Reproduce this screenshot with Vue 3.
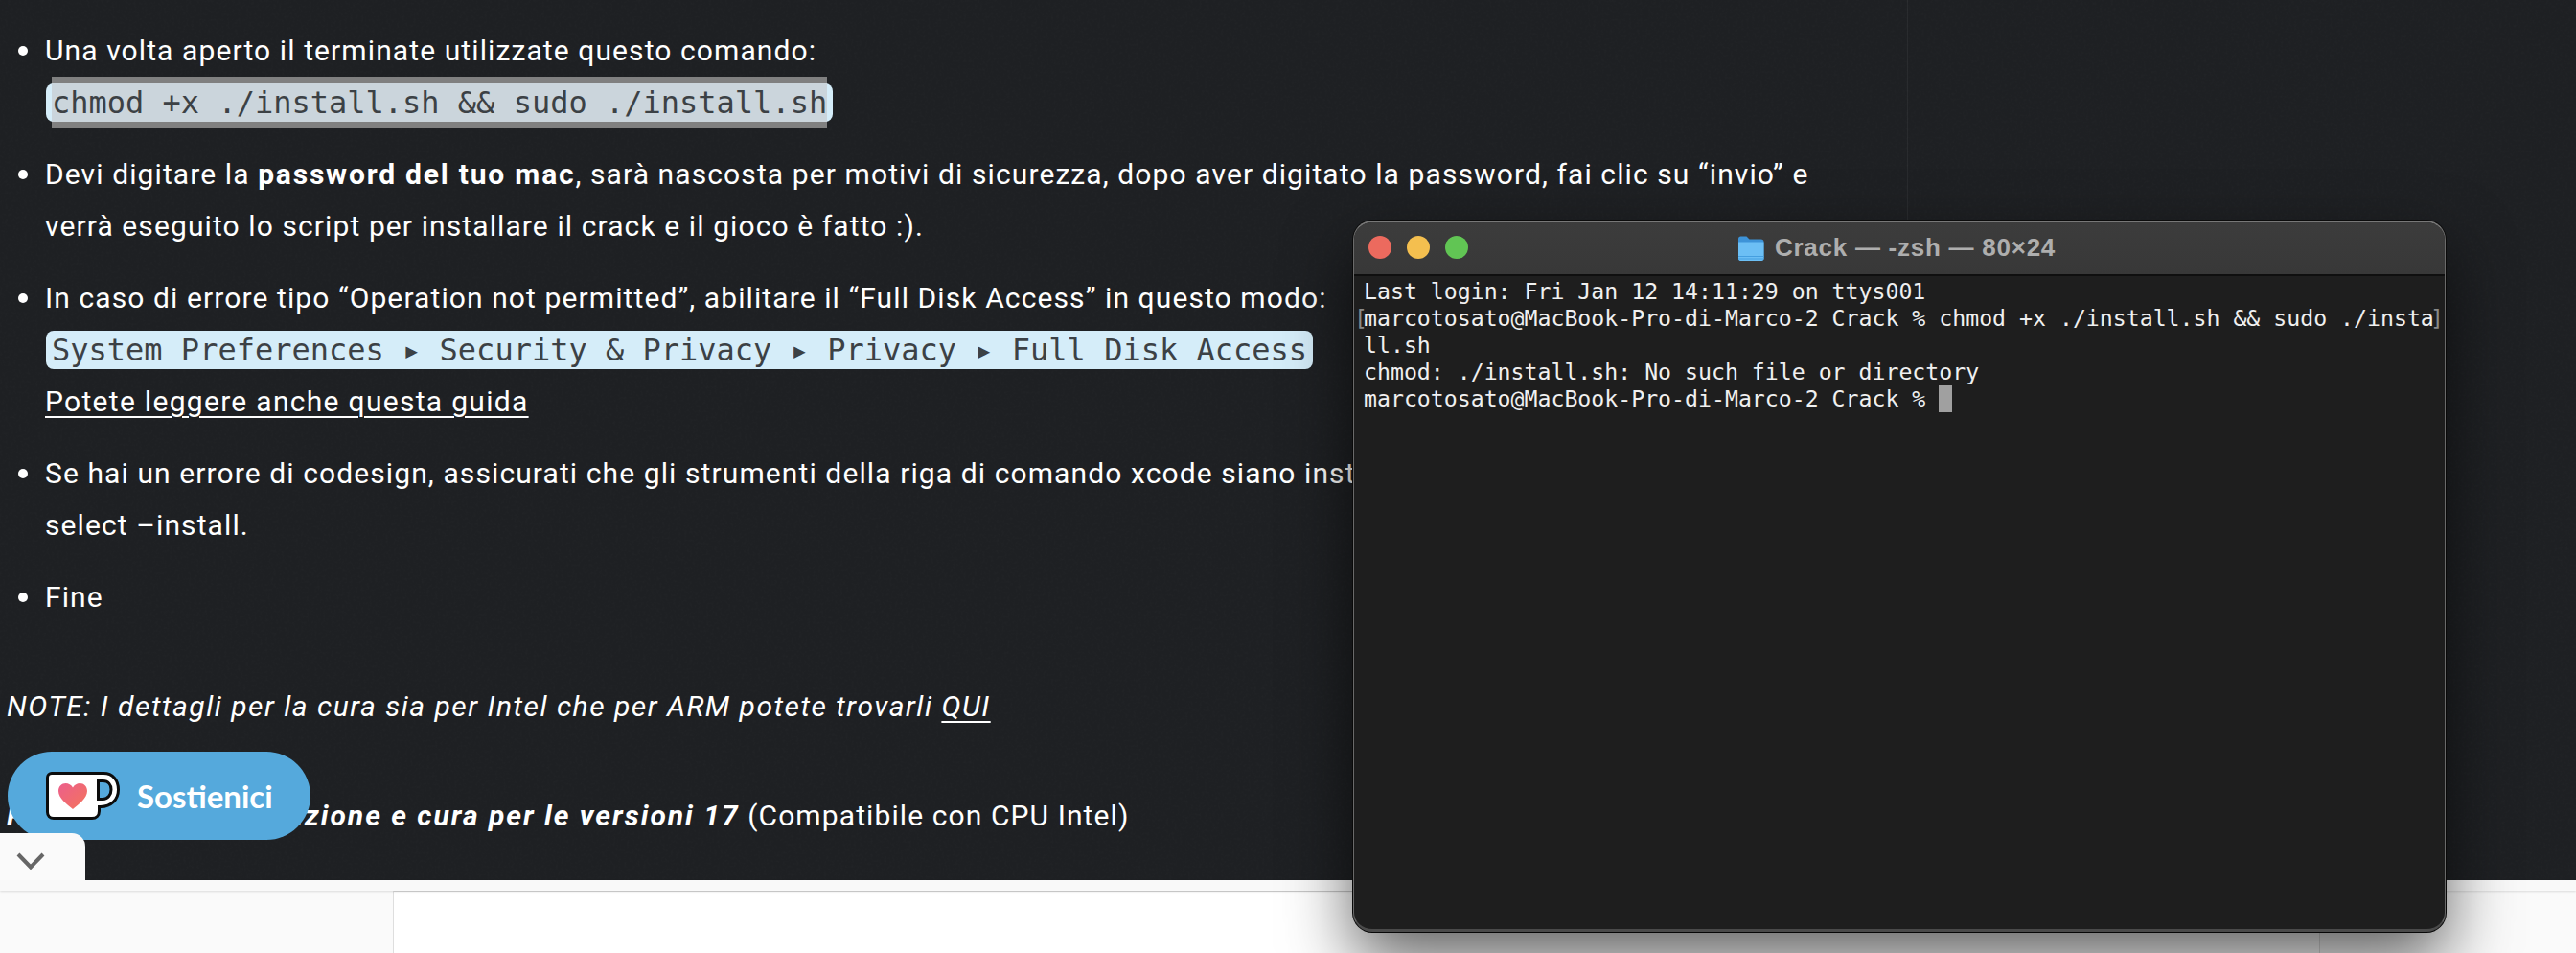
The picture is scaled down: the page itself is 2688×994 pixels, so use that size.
<template>
  <div class="page">
    <svg class="grain" width="2688" height="918" aria-hidden="true">
      <filter id="grain-noise">
        <feTurbulence type="fractalNoise" baseFrequency="0.35" numOctaves="3" seed="4" />
        <feColorMatrix values="0 0 0 0 1  0 0 0 0 1  0 0 0 0 1  0.5 0 0 0 -0.2" />
      </filter>
      <rect width="2688" height="918" filter="url(#grain-noise)" opacity="0.06" />
    </svg>

    <article class="post">
      <ul class="steps">
        <li>
          Una volta aperto il terminate utilizzate questo comando:
          <div class="cmd"><code class="cmd__code cmd__code--copied"><span>chmod +x ./install.sh &amp;&amp; sudo ./install.sh</span></code></div>
        </li>
        <li>
          Devi digitare la <strong>password del tuo mac</strong>, sarà nascosta per motivi di sicurezza, dopo aver digitato la password, fai clic su “invio” e<br />
          verrà eseguito lo script per installare il crack e il gioco è fatto :).
        </li>
        <li>
          In caso di errore tipo “Operation not permitted”, abilitare il “Full Disk Access” in questo modo:
          <div class="cmd"><code class="cmd__code">System Preferences ▸ Security &amp; Privacy ▸ Privacy ▸ Full Disk Access</code></div>
          <a class="link link--guide">Potete leggere anche questa guida</a>
        </li>
        <li>
          Se hai un errore di codesign, assicurati che gli strumenti della riga di comando xcode siano installati: xcode-<br />
          select –install.
        </li>
        <li>Fine</li>
      </ul>
      <p class="note"><em>NOTE: I dettagli per la cura sia per Intel che per ARM potete trovarli <a class="link">QUI</a></em></p>
      <p class="note"><strong><em>Procedura di installazione e cura per le versioni 17</em></strong> (Compatibile con CPU Intel)</p>
    </article>

    <footer class="below">
      <div class="below__strip"></div>
      <div class="below__panels">
        <div class="below__side"></div>
        <div class="below__main"></div>
        <div class="below__rest"></div>
      </div>
    </footer>

    <button class="kofi">
      <svg class="kofi__cup" width="77" height="50" viewBox="0 0 77 50">
        <defs>
          <linearGradient id="heart-fill" x1="0" y1="0" x2="1" y2="1">
            <stop offset="0" stop-color="#ec5f8c" />
            <stop offset="1" stop-color="#f4745a" />
          </linearGradient>
        </defs>
        <path d="M6 1.5H60C70 1.5 75.5 9 75.5 18.500C75.500 29 68 36.500 57 36.500H55.500V41C55.500 45.500 52.500 48.500 48 48.500H8C4 48.500 1.500 46 1.500 42V6C1.500 3.500 3.500 1.500 6 1.500Z" fill="#fff" stroke="#0c0c0c" stroke-width="3" />
        <path d="M54.500 9.500H59.500C65 9.500 68 13.500 68 18.500C68 24 64.500 28.500 59.500 28.500H54.500Z" fill="#55a9dc" stroke="#0c0c0c" stroke-width="3" />
        <path d="M28 39C22 34 13 27.500 13 20C13 15 16.500 12 20.500 12C23.500 12 26.500 13.500 28 16.500C29.500 13.500 32.500 12 35.500 12C39.500 12 43 15 43 20C43 27.500 34 34 28 39Z" fill="url(#heart-fill)" />
      </svg>
      <span>Sostienici</span>
    </button>

    <button class="collapse">
      <svg width="30" height="18" viewBox="0 0 30 18">
        <path d="M2 2L15 15.500L28 2" fill="none" stroke="#666" stroke-width="4" />
      </svg>
    </button>

    <section class="term">
      <header class="term__bar">
        <div class="term__lights">
          <i class="light light--red"></i>
          <i class="light light--yellow"></i>
          <i class="light light--green"></i>
        </div>
        <div class="term__title">
          <svg width="28" height="26" viewBox="0 0 28 26">
            <path d="M1 3C1 1.500 2 .500 3.500 .500H9.500L12.500 3.500H24.500C26.500 3.500 27.500 4.500 27.500 6V23.500C27.500 25 26.500 26 25 26H3.500C2 26 1 25 1 23.500Z" fill="#3d93d8" />
            <path d="M1 6.500H27.500V23.500C27.500 25 26.500 26 25 26H3.500C2 26 1 25 1 23.500Z" fill="#6cbff5" />
            <path d="M1 21.500H27.500M1 24H27.500" stroke="#459fe0" stroke-width="1" />
          </svg>
          <span>Crack — -zsh — 80×24</span>
        </div>
      </header>
      <div class="term__body">
        <div v-for="(line, i) in lines" :key="i" class="term__line">
          <span v-if="line.mark" class="term__mark term__mark--left">[</span>{{ line.text }}<span v-if="line.cursor" class="term__cursor"></span><span v-if="line.mark" class="term__mark term__mark--right">]</span>
        </div>
      </div>
    </section>
  </div>
</template>

<script setup>
const lines = [
  { text: 'Last login: Fri Jan 12 14:11:29 on ttys001' },
  { text: 'marcotosato@MacBook-Pro-di-Marco-2 Crack % chmod +x ./install.sh && sudo ./insta', mark: true },
  { text: 'll.sh' },
  { text: 'chmod: ./install.sh: No such file or directory' },
  { text: 'marcotosato@MacBook-Pro-di-Marco-2 Crack % ', cursor: true }
]
</script>

<style scoped>
.page {
  position: relative;
  width: 2688px;
  height: 994px;
  overflow: hidden;
  background: #1e2023;
  font-family: Roboto, "Liberation Sans", sans-serif;
  font-size: 30px;
  font-weight: 400;
  letter-spacing: 1.1px;
  line-height: 54px;
  color: #fff;
}

.grain {
  position: absolute;
  top: 0;
  left: 0;
}

.post {
  position: relative;
  height: 918px;
  padding-top: 26px;
  box-sizing: border-box;
  background: linear-gradient(90deg, transparent 1990px, rgba(255, 255, 255, 0.05) 1990px, rgba(255, 255, 255, 0.05) 1991px, transparent 1991px);
}

.steps {
  width: 1890px;
  margin: 0;
  padding: 0 0 0 47px;
  list-style: none;
}

.steps li {
  position: relative;
  margin-bottom: 21px;
}

.steps li::before {
  content: "";
  position: absolute;
  top: 22px;
  left: -28px;
  width: 10px;
  height: 10px;
  border-radius: 50%;
  background: #fff;
}

.steps strong {
  font-weight: 700;
  letter-spacing: 1.8px;
}

.cmd {
  display: flex;
  align-items: center;
  height: 54px;
}

.cmd__code {
  height: 40px;
  margin-left: 1px;
  padding: 0 6px;
  border-radius: 8px;
  background: #d5edf9;
  font-family: "DejaVu Sans Mono", monospace;
  font-size: 32px;
  font-weight: 400;
  letter-spacing: 0;
  line-height: 40px;
  color: #3c4145;
}

.cmd__code--copied span {
  display: block;
  background: #cbd5dc;
  box-shadow: 0 -7px 0 #808080, 0 7px 0 #808080;
}

.link {
  color: #fff;
  text-decoration: underline;
  text-decoration-thickness: 2px;
  text-underline-offset: 5px;
}

.link--guide {
  letter-spacing: 1.3px;
}

.note {
  margin: 60px 0 0 7px;
}

.note > em {
  letter-spacing: 1.5px;
}

.note strong {
  font-weight: 700;
  letter-spacing: 2px;
}

.below {
  display: flex;
  flex-direction: column;
  height: 76px;
}

.below__strip {
  position: relative;
  height: 11px;
  background: #f9f9f9;
  box-shadow: 0 1px 2px rgba(0, 0, 0, 0.12);
}

.below__panels {
  flex: 1;
  display: flex;
}

.below__side {
  width: 410px;
  background: #fafafa;
  border-right: 1px solid #dedede;
}

.below__main {
  width: 2009px;
  background: #fff;
  border-top: 1px solid #d8d8d8;
  border-right: 1px solid #dedede;
}

.below__rest {
  flex: 1;
  background: #fafafa;
}

.kofi {
  position: absolute;
  top: 784px;
  left: 8px;
  display: flex;
  align-items: center;
  gap: 18px;
  width: 316px;
  height: 92px;
  padding: 0 0 0 40px;
  border: none;
  border-radius: 46px;
  background: #55a9dc;
  font-family: Lato, sans-serif;
  font-size: 33px;
  font-weight: 700;
  letter-spacing: 0;
  color: #fff;
}

.collapse {
  position: absolute;
  top: 869px;
  left: 0;
  width: 89px;
  height: 49px;
  padding: 20px 42px 11px 17px;
  border: none;
  border-top-right-radius: 14px;
  background: #fafafa;
}

.collapse svg {
  display: block;
}

.term {
  position: absolute;
  top: 230px;
  left: 1412px;
  display: flex;
  flex-direction: column;
  width: 1140px;
  height: 742px;
  box-sizing: border-box;
  overflow: hidden;
  border: 1px solid #6a6a6a;
  border-top: 2px solid #777;
  border-bottom: 3px solid #4a4a4a;
  border-radius: 20px;
  box-shadow: 0 30px 70px rgba(0, 0, 0, 0.62), 0 0 0 1px #0d0d0d;
  background: #1e1e1e;
  font-family: "DejaVu Sans Mono", monospace;
  font-size: 23.2px;
  font-weight: 400;
  letter-spacing: 0;
  line-height: 27.9px;
  color: #f0f0f0;
}

.term__bar {
  position: relative;
  flex: none;
  display: flex;
  align-items: center;
  justify-content: center;
  height: 54px;
  border-bottom: 2px solid #0f0f0f;
  background: linear-gradient(#3c3c3c, #383838);
}

.term__lights {
  position: absolute;
  top: 14px;
  left: 15px;
  display: flex;
  gap: 16px;
}

.light {
  width: 24px;
  height: 24px;
  border-radius: 50%;
}

.light--red {
  background: #ec6a5e;
}

.light--yellow {
  background: #f4bf4f;
}

.light--green {
  background: #61c554;
}

.term__title {
  display: flex;
  align-items: center;
  gap: 11px;
  padding-right: 6px;
  font-family: "Liberation Sans", sans-serif;
  font-size: 26px;
  font-weight: 700;
  letter-spacing: 0.75px;
  color: #aeaeae;
}

.term__body {
  padding: 2px 0 0 10px;
}

.term__line {
  position: relative;
  height: 27.9px;
  white-space: pre;
}

.term__mark {
  position: absolute;
  top: 0;
  color: #8a8a8a;
  font-weight: 300;
}

.term__mark--left {
  left: -10px;
}

.term__mark--right {
  right: 1px;
}

.term__cursor {
  display: inline-block;
  width: 14px;
  height: 28px;
  background: #a0a0a0;
  vertical-align: top;
}
</style>
